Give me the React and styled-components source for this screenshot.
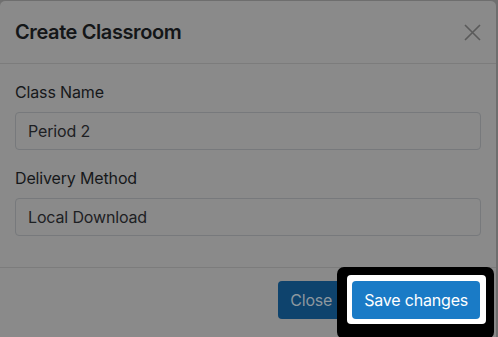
import React from 'react';
import styled, { createGlobalStyle } from 'styled-components';

const GlobalStyle = createGlobalStyle`
  html, body {
    margin: 0;
    padding: 0;
    background: #6f6f6f;
  }
  * {
    box-sizing: border-box;
  }
`;

const Page = styled.div`
  width: 498px;
  height: 337px;
  overflow: hidden;
  background: #6f6f6f;
  font-family: Inter, 'Liberation Sans', sans-serif;
  letter-spacing: -0.15px;
`;

const Modal = styled.div`
  width: 498px;
  margin-left: -1px;
  background: #8a8a8a;
  border: 1px solid #6e6e6e;
  border-radius: 6px;
  min-height: 400px;
`;

const Header = styled.div`
  display: flex;
  align-items: center;
  justify-content: space-between;
  padding: 16px 15px;
  border-bottom: 1px solid #7c7c7c;
`;

const Title = styled.h5`
  margin: 0;
  font-size: 20px;
  line-height: 30px;
  font-weight: 600;
  letter-spacing: -0.4px;
  color: #141618;
`;

const CloseIcon = styled.button`
  display: flex;
  align-items: center;
  justify-content: center;
  width: 18px;
  height: 18px;
  padding: 0;
  border: none;
  background: none;
  color: #5a5a5a;
`;

const Body = styled.div`
  padding: 16px 15px 15px;
`;

const Group = styled.div`
  display: flex;
  flex-direction: column;
  margin-bottom: 16px;
`;

const Label = styled.label`
  font-size: 16px;
  line-height: 24px;
  margin-bottom: 8px;
  color: #16181a;
`;

const Input = styled.div`
  height: 38px;
  padding: 0 12px;
  display: flex;
  align-items: center;
  font-size: 16px;
  color: #1d2023;
  background: #8a8a8a;
  border: 1px solid #77797c;
  border-radius: 4px;
`;

const Footer = styled.div`
  display: flex;
  justify-content: flex-end;
  align-items: center;
  padding: 13px 12px;
  border-top: 1px solid #7c7c7c;
`;

const Button = styled.button`
  height: 38px;
  margin: 0 4px;
  padding: 0 12px;
  font-family: inherit;
  font-size: 16px;
  line-height: 24px;
  letter-spacing: -0.2px;
  border: none;
  border-radius: 4px;
  background: ${({ $dim }) => ($dim ? '#0e436d' : '#1a7bc6')};
  color: ${({ $dim }) => ($dim ? '#8c979f' : '#ffffff')};
`;

// white + black ring that lifts the highlighted button out of the overlay
const Spot = styled.span`
  position: relative;
  display: inline-flex;
  isolation: isolate;
  margin: 0 4px;

  &::before {
    content: '';
    position: absolute;
    inset: -14px -14px -20px -15px;
    background: #000;
    border-radius: 7px;
    z-index: -1;
  }

  &::after {
    content: '';
    position: absolute;
    inset: -6px -6px -5px -5px;
    background: #fff;
    border-radius: 4px;
    z-index: -1;
  }

  ${Button} {
    margin: 0;
  }
`;

const Fields = [
  { label: 'Class Name', value: 'Period 2' },
  { label: 'Delivery Method', value: 'Local Download' },
];

export default function App() {
  return (
    <>
      <GlobalStyle />
      <Page>
        <Modal>
          <Header>
            <Title>Create Classroom</Title>
            <CloseIcon aria-label="Close">
              <svg width="17" height="17" viewBox="0 0 17 17">
                <path d="M1 1L16 16M16 1L1 16" stroke="currentColor" strokeWidth="1.6" fill="none" />
              </svg>
            </CloseIcon>
          </Header>
          <Body>
            {Fields.map((f) => (
              <Group key={f.label}>
                <Label>{f.label}</Label>
                <Input>{f.value}</Input>
              </Group>
            ))}
          </Body>
          <Footer>
            <Button $dim>Close</Button>
            <Spot>
              <Button>Save changes</Button>
            </Spot>
          </Footer>
        </Modal>
      </Page>
    </>
  );
}
